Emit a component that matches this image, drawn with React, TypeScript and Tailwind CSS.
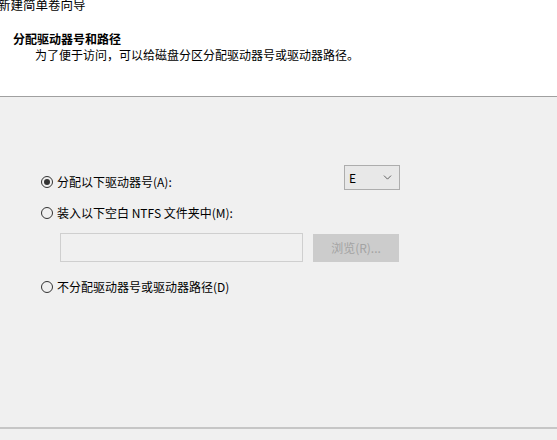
import { ChevronDown } from "lucide-react";

function Radio({ checked, label }: { checked?: boolean; label: string }) {
  return (
    <label className="flex items-center gap-[4px] h-[14px] leading-[14px]">
      <span className="flex size-[12px] shrink-0 items-center justify-center rounded-full border border-[#333333] bg-[#f0f0f0]">
        {checked && <span className="size-[6px] rounded-full bg-[#333333]" />}
      </span>
      <span className="text-[12px] text-black whitespace-nowrap">{label}</span>
    </label>
  );
}

export default function App() {
  return (
    <div
      className="flex h-[440px] w-[557px] flex-col overflow-hidden bg-[#f0f0f0]"
      style={{ fontFamily: '"Noto Sans CJK SC", "Liberation Sans", sans-serif' }}
    >
      <div className="h-[97px] shrink-0 border-b border-[#a0a0a0] bg-white">
        <div className="mt-[-3px] ml-[-2px] text-[12.5px] leading-[16px] text-black">新建简单卷向导</div>
        <div className="mt-[19px] ml-[13px] text-[12px] font-bold leading-[14px] text-black">
          分配驱动器号和路径
        </div>
        <div className="mt-[2px] ml-[35px] text-[12px] leading-[14px] text-black">
          为了便于访问，可以给磁盘分区分配驱动器号或驱动器路径。
        </div>
      </div>

      <div className="flex-1 pl-[41px] pt-[68px]">
        <div className="flex w-[359px] items-start">
          <div className="mt-[10px]">
            <Radio checked label="分配以下驱动器号(A):" />
          </div>
          <div className="ml-auto flex h-[25px] w-[56px] items-center justify-between border border-[#adadad] bg-[#e8e8e8] pl-[4px] pr-[5px]">
            <span className="text-[12px] leading-[14px] text-black">E</span>
            <ChevronDown size={13} strokeWidth={1.5} className="text-[#444444]" />
          </div>
        </div>

        <div className="mt-[16px]">
          <Radio label="装入以下空白 NTFS 文件夹中(M):" />
        </div>

        <div className="mt-[13px] ml-[19px] flex items-start gap-[10px]">
          <div className="h-[29px] w-[243px] border border-[#cfcfcf] bg-[#f0f0f0]" />
          <div className="mt-[1px] flex h-[28px] w-[86px] items-center justify-center bg-[#cccccc] text-[12px] leading-[14px] text-[#a3a3a3]">
            浏览(R)...
          </div>
        </div>

        <div className="mt-[18px]">
          <Radio label="不分配驱动器号或驱动器路径(D)" />
        </div>
      </div>

      <div className="h-[13px] shrink-0 border-t-2 border-[#c6c6c6] bg-[#f0f0f0]" />
    </div>
  );
}
